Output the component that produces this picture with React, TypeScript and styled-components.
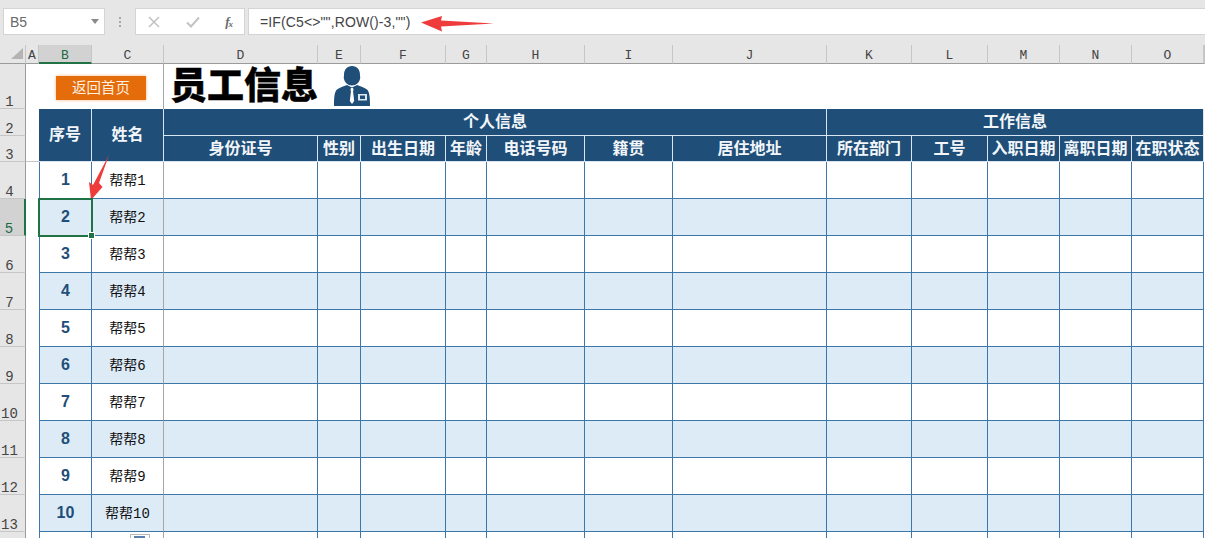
import React from 'react'
import styled, { createGlobalStyle } from 'styled-components'

const GlobalStyle = createGlobalStyle`
  html, body {
    margin: 0;
    padding: 0;
    background: #fff;
  }
  body {
    width: 1205px;
    height: 538px;
    overflow: hidden;
    font-family: "Liberation Sans", "Noto Sans CJK SC", sans-serif;
  }
`

const COLUMNS = ['A', 'B', 'C', 'D', 'E', 'F', 'G', 'H', 'I', 'J', 'K', 'L', 'M', 'N', 'O']
const BLUE = '#1f4e78'
const LINE = '#3d76a8'

const subHeads = ['身份证号', '性别', '出生日期', '年龄', '电话号码', '籍贯', '居住地址', '所在部门', '工号', '入职日期', '离职日期', '在职状态']
const people = [1, 2, 3, 4, 5, 6, 7, 8, 9, 10]

const App = () => {
  return (
    <Page>
      <GlobalStyle />
      <FormulaBar>
        <NameBox>
          B5
          <Caret />
        </NameBox>
        <Dots>
          <i />
          <i />
          <i />
        </Dots>
        <FnBox>
          <svg width="12" height="12" viewBox="0 0 12 12">
            <path d="M1 1l10 10M11 1L1 11" stroke="#c3c3c3" strokeWidth="1.6" fill="none" />
          </svg>
          <svg width="14" height="12" viewBox="0 0 14 12">
            <path d="M1 6.5l4 4L13 1.5" stroke="#c3c3c3" strokeWidth="2" fill="none" />
          </svg>
          <FxLabel>
            f<sub>x</sub>
          </FxLabel>
        </FnBox>
        <FormulaInput>=IF(C5&lt;&gt;"",ROW()-3,"")</FormulaInput>
      </FormulaBar>

      <Sheet>
        <Corner>
          <svg width="14" height="12" viewBox="0 0 14 12">
            <path d="M13 0v11H1z" fill="#b4b4b4" />
          </svg>
        </Corner>
        {COLUMNS.map((c) => (
          <ColHead key={c} $active={c === 'B'}>
            {c}
          </ColHead>
        ))}
        <ColHead />

        <RowHead>1</RowHead>
        <Blank />
        <ButtonCell>
          <HomeButton>返回首页</HomeButton>
        </ButtonCell>
        <TitleCell>
          <Title>员工信息</Title>
          <svg width="38" height="41" viewBox="0 0 38 41">
            <path
              d="M11 9c0-5.500 3-9 8-9s8 3.500 8 9c0 1.500.5 2.500 0 4-.8 3.500-3.500 6.500-8 6.500s-7.200-3-8-6.500c-.5-1.500 0-2.500 0-4z"
              fill="#1f4e78"
            />
            <path
              d="M1 40c0-8 .3-14 3-16.500 2.500-2 6.500-3 10-4.500l5 2.500 5-2.500c3.500 1.500 7.500 2.500 10 4.500 2.700 2.500 3 8.500 3 16.500z"
              fill="#1f4e78"
            />
            <path d="M18 22h2l.6 2-.6 1 1.200 10-2.200 3-2.200-3 1.200-10-.6-1z" fill="#fff" />
            <rect x="25" y="28" width="9" height="6.500" fill="#dfe8f0" />
            <rect x="27" y="29.500" width="5" height="3.500" fill="#1f4e78" />
          </svg>
        </TitleCell>
        <Blank />

        <RowHead>2</RowHead>
        <Blank />
        <HeadCell $tall $raised>序号</HeadCell>
        <HeadCell $tall $raised>姓名</HeadCell>
        <HeadCell $span={7} $raised>个人信息</HeadCell>
        <HeadCell $span={5} $raised>工作信息</HeadCell>
        <Blank />

        <RowHead>3</RowHead>
        <Margin $underline />
        {subHeads.map((h) => (
          <HeadCell key={h}>{h}</HeadCell>
        ))}
        <Blank />

        {people.map((n) => (
          <React.Fragment key={n}>
            <RowHead $active={n === 2}>{n + 3}</RowHead>
            <Margin />
            <NumCell $band={n % 2 === 0} $selected={n === 2}>
              {n}
              {n === 2 && <FillHandle />}
            </NumCell>
            <NameCell $band={n % 2 === 0}>帮帮{n}</NameCell>
            {subHeads.map((h) => (
              <DataCell key={h} $band={n % 2 === 0} />
            ))}
            <Blank />
          </React.Fragment>
        ))}

        <RowHead />
        <Blank />
        <NumCell />
        <NameCell>
          <PasteTag />
        </NameCell>
        {subHeads.map((h) => (
          <DataCell key={h} />
        ))}
        <Blank />
      </Sheet>

      <Arrows width="1205" height="538" viewBox="0 0 1205 538">
        <path d="M421 22.500L442 16l-1 4.500 53 3-53 3 1 5z" fill="#ee3b3b" />
        <path d="M109 155L99 183l3.500 4L91 200l-2-18 4 3z" fill="#ee3b3b" />
      </Arrows>
    </Page>
  )
}

const Page = styled.div`
  position: relative;
  width: 1205px;
  height: 538px;
  overflow: hidden;
  background: #e6e6e6;
`

const FormulaBar = styled.div`
  display: flex;
  align-items: center;
  height: 45px;
  padding: 0 0 2px 3px;
  box-sizing: border-box;
`

const boxStyle = `
  display: flex;
  align-items: center;
  height: 27px;
  box-sizing: border-box;
  background: #fff;
  border: 1px solid #d4d4d4;
`

const NameBox = styled.div`
  ${boxStyle}
  position: relative;
  width: 102px;
  padding-left: 6px;
  font-size: 14px;
  color: #6a6a6a;
`

const Caret = styled.span`
  position: absolute;
  right: 5px;
  top: 10px;
  border-left: 4px solid transparent;
  border-right: 4px solid transparent;
  border-top: 5px solid #8a8a8a;
`

const Dots = styled.div`
  display: flex;
  flex-direction: column;
  align-items: center;
  gap: 2px;
  width: 30px;

  i {
    width: 2px;
    height: 2px;
    background: #a8a8a8;
  }
`

const FnBox = styled.div`
  ${boxStyle}
  width: 110px;
  justify-content: space-between;
  padding: 0 12px 0 12px;
`

const FxLabel = styled.span`
  font-family: "Liberation Serif", serif;
  font-style: italic;
  font-weight: bold;
  font-size: 13px;
  letter-spacing: -1px;
  color: #6a6a6a;

  sub {
    font-size: 9px;
    vertical-align: -1px;
  }
`

const FormulaInput = styled.div`
  ${boxStyle}
  flex: 1;
  margin-left: 3px;
  padding-left: 11px;
  border-right: none;
  font-size: 14px;
  letter-spacing: 0.12px;
  color: #444;
`

const Sheet = styled.div`
  display: grid;
  grid-template-columns: 26px 13px 53px 72px 154px 43px 85px 41px 98px 88px 154px 85px 76px 72px 72px 72px 1px;
  grid-template-rows: 19px 45px 27px 26px repeat(11, 37px);
  background: #fff;
`

const Corner = styled.div`
  display: flex;
  align-items: flex-end;
  justify-content: flex-end;
  padding: 0 1px 3px 0;
  box-sizing: border-box;
  background: #e6e6e6;
  border-bottom: 1px solid #9b9b9b;
  border-right: 1px solid #c6c6c6;
`

const ColHead = styled.div<{ $active?: boolean }>`
  display: flex;
  align-items: center;
  justify-content: center;
  padding-top: 3px;
  box-sizing: border-box;
  font-family: "Liberation Mono", monospace;
  font-size: 13px;
  color: ${(p) => (p.$active ? '#1d6a43' : '#444')};
  background: ${(p) => (p.$active ? '#d2d2d2' : '#e6e6e6')};
  border-right: 1px solid #c6c6c6;
  border-bottom: ${(p) => (p.$active ? '2px solid #217346' : '1px solid #9b9b9b')};
`

const RowHead = styled.div<{ $active?: boolean }>`
  display: flex;
  align-items: flex-end;
  justify-content: center;
  padding: 0 6px 0 0;
  box-sizing: border-box;
  font-family: "Liberation Mono", monospace;
  font-size: 14px;
  line-height: 12px;
  color: ${(p) => (p.$active ? '#1d6a43' : '#444')};
  background: ${(p) => (p.$active ? '#d2d2d2' : '#e6e6e6')};
  border-bottom: 1px solid #c6c6c6;
  border-right: ${(p) => (p.$active ? '2px solid #217346' : '1px solid #9b9b9b')};
`

const Blank = styled.div`
  background: #fff;
`

const Margin = styled.div<{ $underline?: boolean }>`
  background: #fff;
  border-bottom: ${(p) => (p.$underline ? '1px solid #c6c6c6' : 'none')};
`

const ButtonCell = styled.div`
  grid-column: span 2;
  display: flex;
  align-items: flex-start;
  padding: 12px 0 0 17px;
  box-sizing: border-box;
  background: #fff;
  border-right: 1px solid #a6a6a6;
`

const HomeButton = styled.div`
  display: flex;
  align-items: center;
  justify-content: center;
  width: 90px;
  height: 24px;
  padding-bottom: 3px;
  box-sizing: border-box;
  font-size: 14.5px;
  color: #fdf0e0;
  background: #e46c0a;
  box-shadow: 0 0 3px #f0b583;
`

const TitleCell = styled.div`
  grid-column: span 12;
  display: flex;
  align-items: center;
  gap: 15px;
  padding: 0 0 1px 6px;
  box-sizing: border-box;
`

const Title = styled.div`
  font-family: "Liberation Sans", "Noto Sans CJK SC", sans-serif;
  font-size: 37px;
  line-height: 43px;
  font-weight: 900;
  color: #000;
  -webkit-text-stroke: 0.4px #000;
`

const HeadCell = styled.div<{ $span?: number; $tall?: boolean; $raised?: boolean }>`
  grid-column: ${(p) => (p.$span ? `span ${p.$span}` : 'auto')};
  grid-row: ${(p) => (p.$tall ? 'span 2' : 'auto')};
  display: flex;
  align-items: center;
  justify-content: center;
  padding-bottom: ${(p) => (p.$raised ? '5px' : '3px')};
  box-sizing: border-box;
  font-family: "Noto Sans CJK SC", sans-serif;
  font-size: 16px;
  font-weight: bold;
  white-space: nowrap;
  color: #f2f6fa;
  background: ${BLUE};
  border-right: 1px solid #d9e6f2;
  border-bottom: 1px solid #d9e6f2;
`

const DataCell = styled.div<{ $band?: boolean }>`
  box-sizing: border-box;
  background: ${(p) => (p.$band ? '#ddebf7' : '#fff')};
  border-right: 1px solid ${LINE};
  border-bottom: 1px solid ${LINE};
`

const NumCell = styled(DataCell)<{ $selected?: boolean }>`
  position: relative;
  z-index: ${(p) => (p.$selected ? 1 : 0)};
  display: flex;
  align-items: center;
  justify-content: center;
  font-size: 16px;
  font-weight: bold;
  color: ${BLUE};
  border-left: 1px solid ${LINE};
  outline: ${(p) => (p.$selected ? '2px solid #217346' : 'none')};
  outline-offset: -1px;
`

const NameCell = styled(DataCell)`
  position: relative;
  display: flex;
  align-items: center;
  justify-content: center;
  padding-bottom: 2px;
  font-family: "Liberation Mono", "Noto Sans CJK SC", monospace;
  font-size: 14px;
  color: #111;
  border-right-color: #a6a6a6;
`

const FillHandle = styled.span`
  position: absolute;
  right: -4px;
  bottom: -4px;
  width: 5px;
  height: 5px;
  background: #217346;
  border: 1px solid #fff;
`

const PasteTag = styled.span`
  position: absolute;
  left: 38px;
  top: 2px;
  width: 20px;
  height: 12px;
  box-sizing: border-box;
  padding: 1px 4px 0 3px;
  background: #fff;
  border: 1px solid #b9b9b9;

  &::after {
    content: '';
    display: block;
    height: 8px;
    background: #5a7fb0;
  }
`

const Arrows = styled.svg`
  position: absolute;
  left: 0;
  top: 0;
  pointer-events: none;
`

export default App
